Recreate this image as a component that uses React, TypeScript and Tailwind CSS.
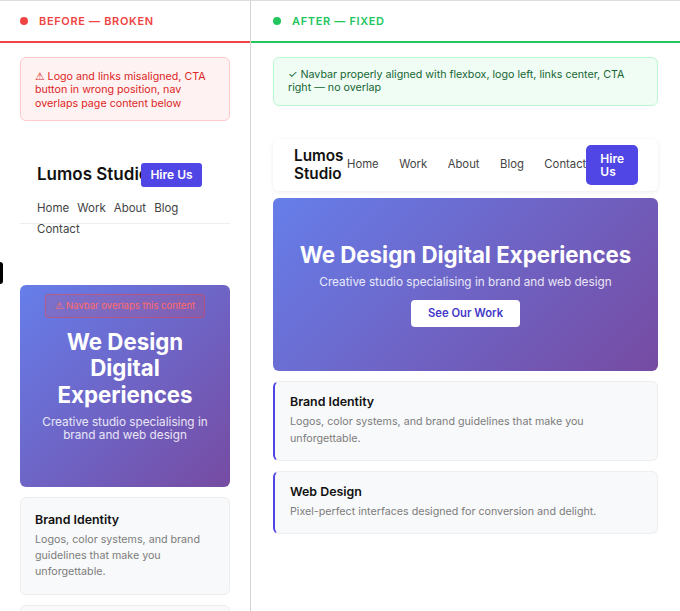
import React from "react";

const services = [
  {
    title: "Brand Identity",
    text: "Logos, color systems, and brand guidelines that make you unforgettable.",
  },
  {
    title: "Web Design",
    text: "Pixel-perfect interfaces designed for conversion and delight.",
  },
];

const links = ["Home", "Work", "About", "Blog", "Contact"];

function PanelHeader({ label, ok }: { label: string; ok?: boolean }) {
  return (
    <div
      className={`flex h-[42px] items-center gap-[11px] border-b-2 px-5 ${
        ok ? "border-[#22c55e] pl-[22px]" : "border-[#ef4444]"
      }`}
    >
      <span
        className={`h-2 w-2 rounded-full ${ok ? "bg-[#22c55e]" : "bg-[#ef4444]"}`}
      />
      <span
        className={`text-[11px] font-semibold uppercase tracking-[0.06em] ${
          ok ? "text-[#22c55e]" : "text-[#ef4444]"
        }`}
      >
        {label}
      </span>
    </div>
  );
}

function Warn() {
  return <span className="font-['DejaVu_Sans'] leading-none">⚠</span>;
}

function BrokenSide() {
  return (
    <div className="relative w-[251px] shrink-0 border-r border-[#d4d4d4]">
      <PanelHeader label="Before — Broken" />
      <div className="px-5 pt-[14px]">
        <div className="rounded-md border border-[#fecaca] bg-[#fef2f2] px-[14px] pb-[10px] pt-3 text-[10.7px] leading-[13.3px] text-[#dc2626]">
          <Warn /> Logo and links misaligned, CTA button in wrong position, nav overlaps page content below
        </div>

        {/* nav with fixed height, links spill out */}
        <div className="mt-5 h-[83px] border-b border-[#eee] pl-[17px] pt-[22px]">
          <div className="relative flex h-6 items-center">
            <span className="text-[17px] font-semibold leading-none text-[#111]">Lumos Studio</span>
            <button className="absolute left-[104px] top-0 h-6 w-[61px] rounded-[3px] bg-[#4f46e5] text-[12px] font-semibold text-white">
              Hire Us
            </button>
          </div>
          <div className="mt-[11.5px] flex w-[180px] flex-wrap gap-x-2 text-[11.5px] leading-[21px] text-[#444]">
            {links.map((l) => (
              <span key={l}>{l}</span>
            ))}
          </div>
        </div>

        <div className="relative mt-[61px] rounded-md bg-[linear-gradient(135deg,#667eea,#764ba2)] px-5 pb-[45px] pt-[44px] text-center text-white">
          <div className="absolute left-1/2 top-[9px] -translate-x-1/2 whitespace-nowrap rounded-sm border border-[#ef4444]/50 bg-[#ef4444]/15 px-[9px] py-[5px] text-[9.5px] leading-[12px] text-[#ff6b6b]">
            <Warn /> Navbar overlaps this content
          </div>
          <h1 className="text-[22.3px] font-bold leading-[26.5px]">We Design Digital Experiences</h1>
          <p className="mt-[7.5px] text-[11.75px] leading-[13.3px] text-white/85">
            Creative studio specialising in brand and web design
          </p>
        </div>

        {services.map((s) => (
          <div key={s.title} className="mt-[10px] rounded-md border border-[#eee] bg-[#f8f9fa] p-[14px]">
            <h3 className="text-[12.4px] font-semibold leading-4 text-[#111]">{s.title}</h3>
            <p className="mt-1 text-[10.7px] leading-4 text-[#7c7c7c]">{s.text}</p>
          </div>
        ))}
      </div>
      <div className="absolute left-0 top-[261px] h-[22px] w-[3px] rounded-r bg-black" />
    </div>
  );
}

function FixedSide() {
  return (
    <div className="min-w-0 flex-1">
      <PanelHeader label="After — Fixed" ok />
      <div className="px-[22px] pt-[14px]">
        <div className="rounded-md border border-[#bbf7d0] bg-[#f0fdf4] px-[14px] py-[10px] text-[10.7px] leading-[13.3px] text-[#166534]">
          ✓ Navbar properly aligned with flexbox, logo left, links center, CTA right — no overlap
        </div>

        <nav className="mt-[33px] flex items-center justify-between rounded-md bg-white py-[6px] pl-[21px] pr-5 shadow-[0_1px_4px_rgba(0,0,0,0.08)]">
          <span className="text-[15.3px] font-semibold leading-[17.5px] text-[#111]">Lumos Studio</span>
          <div className="flex gap-[20.5px] text-[11.3px] text-[#444]">
            {links.map((l) => (
              <span key={l}>{l}</span>
            ))}
          </div>
          <button className="rounded-[5px] bg-[#4f46e5] px-[14px] py-[7px] text-left text-[12px] font-semibold leading-[13px] text-white">
            Hire Us
          </button>
        </nav>

        <div className="mt-[7px] flex flex-col items-center rounded-md bg-[linear-gradient(135deg,#667eea,#764ba2)] px-4 py-[44px] text-center text-white">
          <h1 className="text-[22.3px] font-bold leading-[26.5px]">We Design Digital Experiences</h1>
          <p className="mt-[7.5px] text-[11.75px] leading-[13.3px] text-white/85">
            Creative studio specialising in brand and web design
          </p>
          <button className="mt-[11.5px] h-[27px] rounded-[4px] bg-white px-[17px] text-[11.25px] font-semibold text-[#4338ca]">
            See Our Work
          </button>
        </div>

        {services.map((s) => (
          <div
            key={s.title}
            className="mt-[10px] rounded-md border border-l-2 border-[#eee] border-l-[#4f46e5] bg-[#f8f9fa] py-3 pl-[15px] pr-4"
          >
            <h3 className="text-[12.4px] font-semibold leading-4 text-[#111]">{s.title}</h3>
            <p className="mt-1 text-[10.7px] leading-[16.7px] text-[#7c7c7c]">{s.text}</p>
          </div>
        ))}
      </div>
    </div>
  );
}

export default function App() {
  return (
    <div className="flex h-[611px] w-[680px] overflow-hidden border-t border-[#ddd] bg-white font-[Inter,sans-serif]">
      <BrokenSide />
      <FixedSide />
    </div>
  );
}
